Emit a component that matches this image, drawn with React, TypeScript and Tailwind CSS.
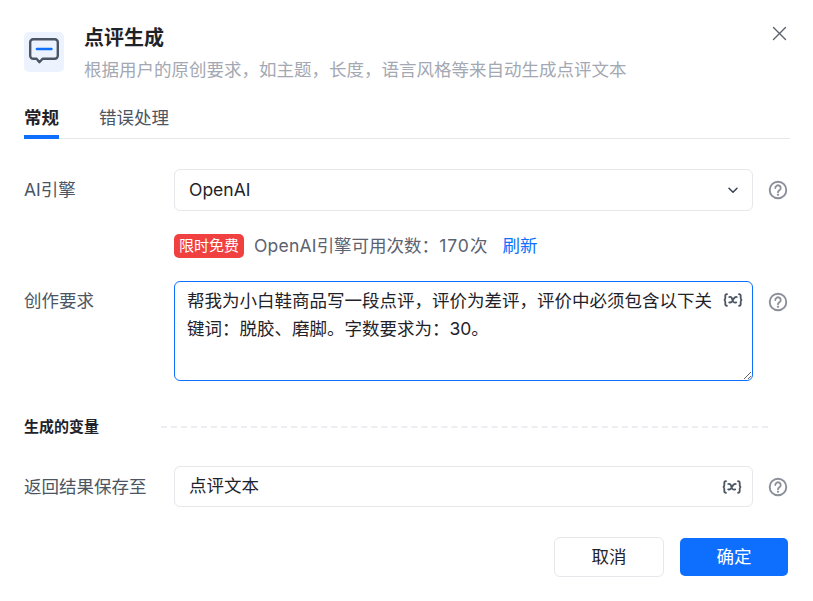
import React from "react";

const font = { fontFamily: 'Inter, "Noto Sans CJK SC", sans-serif' };

function Help() {
  return (
    <svg width="20" height="20" viewBox="0 0 20 20" fill="none" className="shrink-0">
      <circle cx="10" cy="10" r="8.300" stroke="#8b8f99" strokeWidth="1.900" />
      <path d="M7.300 8a2.700 2.700 0 1 1 4.100 2.300c-.9.6-1.400 1-1.400 2" stroke="#8b8f99" strokeWidth="1.800" strokeLinecap="round" />
      <circle cx="10" cy="14.800" r="1.100" fill="#8b8f99" />
    </svg>
  );
}

function VarIcon() {
  return (
    <svg width="20" height="14" viewBox="0 0 20 14" fill="none" stroke="#4b5563" strokeWidth="1.800" strokeLinecap="round">
      <path d="M4 1.200c-1.400 0-1.700.6-1.700 1.700v2.300c0 1-.5 1.600-1.300 1.800.8.2 1.300.8 1.300 1.800v2.300c0 1.100.3 1.700 1.700 1.700" />
      <path d="M16 1.200c1.400 0 1.700.6 1.700 1.700v2.300c0 1 .5 1.600 1.300 1.800-.8.2-1.300.8-1.300 1.800v2.300c0 1.100-.3 1.700-1.700 1.700" />
      <path d="M6.200 4c2-.6 2.600.4 3.200 2.800.6 2.400 1.400 3.200 3.800 2.600M13.800 4c-1.600-.4-2.800.8-3.800 3-1 2.200-1.800 3-3.800 2.400" />
    </svg>
  );
}

function Row({ label, children, top }: { label: string; children: React.ReactNode; top?: boolean }) {
  return (
    <div className={`flex ${top ? "items-start" : "items-center"}`}>
      <div className={`w-[150px] shrink-0 text-[17.5px] leading-[28px] text-[#4b5563] ${top ? "pt-[6px]" : ""}`}>{label}</div>
      <div className="w-[579px] shrink-0">{children}</div>
      <div className={`ml-[15px] ${top ? "pt-[11px]" : ""}`}>
        <Help />
      </div>
    </div>
  );
}

export default function App() {
  return (
    <div className="relative h-[601px] w-[813px] overflow-hidden bg-white pl-6 pr-[23px]" style={font}>
      <button className="absolute right-[26px] top-[26px] text-[#4b5563]">
        <svg width="15" height="15" viewBox="0 0 15 15" fill="none" stroke="#5b6270" strokeWidth="1.400" strokeLinecap="round">
          <path d="M1.500 1.500l12 12M13.500 1.500l-12 12" />
        </svg>
      </button>

      <header className="flex pt-[22px]">
        <div className="mt-[10px] flex h-10 w-10 shrink-0 items-center justify-center rounded-[5px] bg-[#edf3fe]">
          <svg width="32" height="30" viewBox="0 0 32 30" fill="none">
            <path d="M5.200 2.200h21.600a3 3 0 0 1 3 3v13.600a3 3 0 0 1-3 3H14.600l-3.200 3.400-2.800-3.400H5.200a3 3 0 0 1-3-3V5.200a3 3 0 0 1 3-3z" stroke="#4b5563" strokeWidth="2.400" strokeLinejoin="round" />
            <path d="M9 12h14.400" stroke="#0e6fff" strokeWidth="2.600" strokeLinecap="round" />
          </svg>
        </div>
        <div className="ml-5">
          <h1 className="pt-px text-[20px] font-bold leading-[30px] text-[#1f2329]">点评生成</h1>
          <p className="mt-[3px] text-[17.5px] leading-[28px] text-[#a3a8b2]">根据用户的原创要求，如主题，长度，语言风格等来自动生成点评文本</p>
        </div>
      </header>

      <nav className="mt-[20px] flex h-[35px] gap-10 border-b border-[#e5e7eb] text-[17.5px] leading-[28px]">
        <div className="h-[35px] border-b-[4px] border-[#0e6fff] font-bold text-[#1f2329]">常规</div>
        <div className="text-[#4b5563]">错误处理</div>
      </nav>

      <div className="mt-[30px]">
        <Row label="AI引擎">
          <div className="flex h-[42px] items-center justify-between rounded-[6px] border border-[#e5e7eb] pl-[14px] pr-[14px] text-[17.5px] text-[#1f2329]">
            <span>OpenAI</span>
            <svg width="10" height="7" viewBox="0 0 10 7" fill="none" stroke="#374151" strokeWidth="1.500" strokeLinecap="round" strokeLinejoin="round">
              <path d="M1 1.200l4 4 4-4" />
            </svg>
          </div>
        </Row>
      </div>

      <div className="ml-[150px] mt-[23px] flex h-6 items-center">
        <span className="flex h-6 w-[70px] items-center justify-center rounded-[5px] bg-[#f04040] text-[15px] text-white">限时免费</span>
        <span className="ml-[10px] pt-px text-[17.5px] text-[#5b6270]">
          <span className="tracking-[0.2px]">OpenAI</span>引擎可用次数：<span className="tracking-[1px]">170</span>次
        </span>
        <span className="ml-[15px] pt-px text-[17.5px] text-[#0e6fff]">刷新</span>
      </div>

      <div className="mt-[23px]">
        <Row label="创作要求" top>
          <div className="relative h-[100px]">
            <textarea
              readOnly
              value="帮我为小白鞋商品写一段点评，评价为差评，评价中必须包含以下关键词：脱胶、磨脚。字数要求为：30。"
              className="block h-[100px] w-full resize-y rounded-[6px] border border-[#0e6fff] pl-3 pr-[37px] pt-[5px] text-[17.5px] leading-[28px] text-[#1f2329] outline-none"
            />
            <div className="absolute right-[10px] top-[12px]">
              <VarIcon />
            </div>
          </div>
        </Row>
      </div>

      <div className="mt-[33px] flex h-[26px] items-center">
        <span className="w-[137px] shrink-0 pt-px text-[15px] font-bold text-[#1f2329]">生成的变量</span>
        <div className="w-[607px] border-t-2 border-dashed border-[#eceef1]" />
      </div>

      <div className="mt-[26px]">
        <Row label="返回结果保存至">
          <div className="relative flex h-[41px] items-center rounded-[6px] border border-[#e5e7eb] pl-[14px] text-[17.5px] text-[#1f2329]">
            <span>点评文本</span>
            <div className="absolute right-[10px] top-[13px]">
              <VarIcon />
            </div>
          </div>
        </Row>
      </div>

      <div className="mt-[30px] flex items-center justify-end gap-4 pr-[2px]">
        <button className="h-10 w-[110px] rounded-[6px] border border-[#e5e7eb] bg-white text-[17.5px] text-[#1f2329]">取消</button>
        <button className="h-[38px] w-[108px] rounded-[5px] bg-[#0e6fff] text-[17.5px] text-white">确定</button>
      </div>
    </div>
  );
}
